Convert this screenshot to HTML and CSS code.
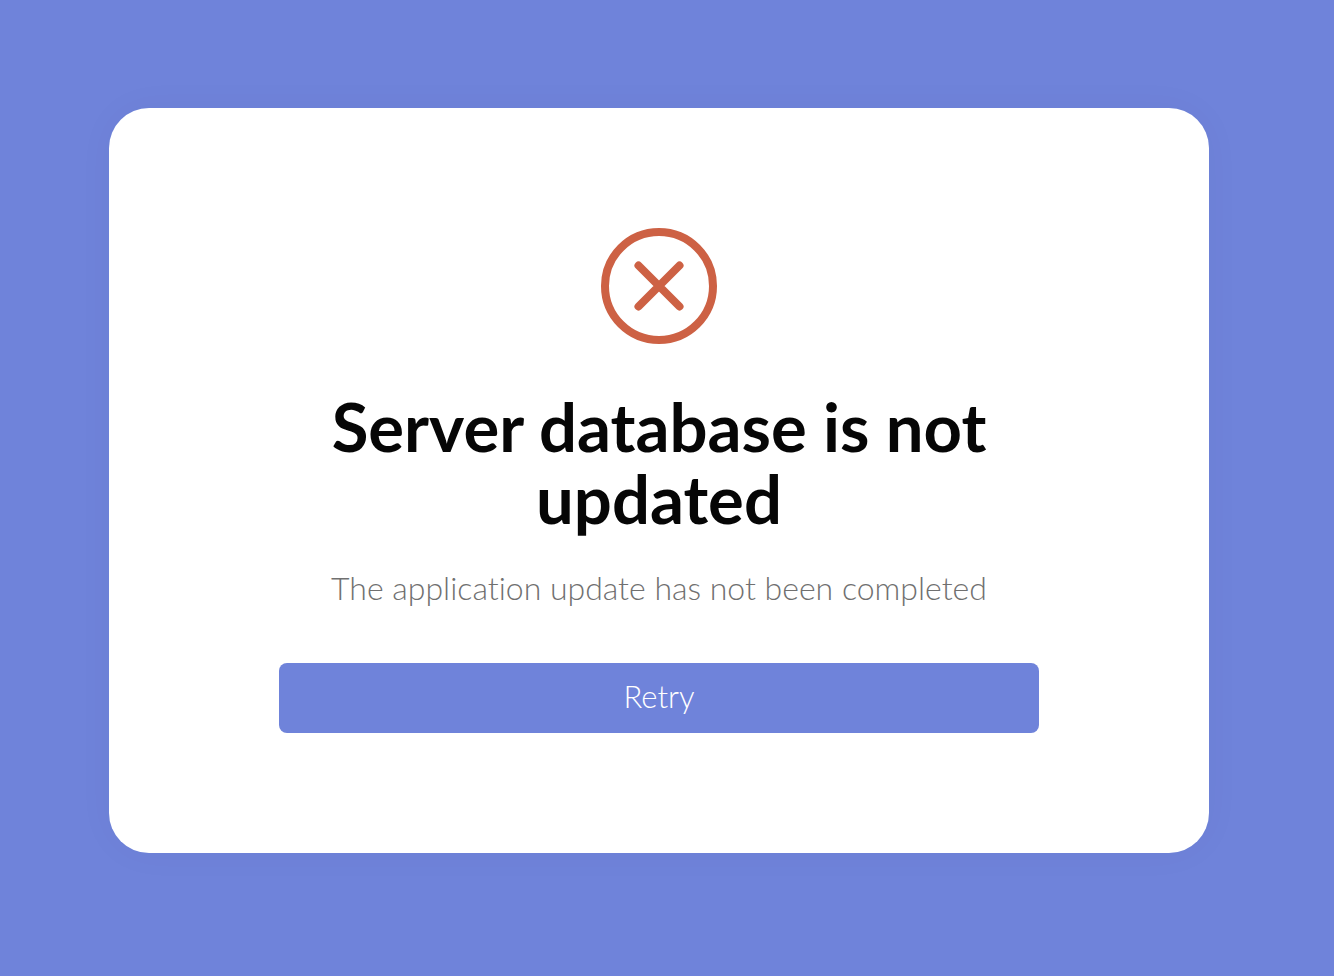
FILE: index.html
```html
<!DOCTYPE html>
<html lang="en">
  <head>
    <meta charset="UTF-8">
    <meta name="viewport" content="width=device-width, initial-scale=1.0">
    <title>Server database is not updated</title>
    <link rel="stylesheet" href="styles.css">
  </head>
  <body>
    <main class="card">
      <div class="content">
        <svg class="error-icon" viewBox="0 0 116 116" fill="none" aria-hidden="true">
          <circle cx="58" cy="58" r="54" />
          <path d="M37.5 37.5l41 41M78.5 37.5l-41 41" />
        </svg>
        <h1>Server database is not updated</h1>
        <p class="subtitle">The application update has not been completed</p>
        <button type="button" class="retry-btn">Retry</button>
      </div>
    </main>
  </body>
</html>
```
FILE: styles.css
```css
:root {
  --primary-color: #6f83da;
  --danger-color: #cd6144;
  --title-color: #060606;
  --secondary-text: #707070;
  --card-bg: #ffffff;
}

* {
  margin: 0;
  padding: 0;
  box-sizing: border-box;
}

body {
  display: flex;
  align-items: center;
  justify-content: center;
  min-height: 100vh;
  padding: 0 16px 15px 0;
  font-family: 'Lato', sans-serif;
  font-variant-ligatures: none;
  background-color: var(--primary-color);
}

.card {
  width: 100%;
  max-width: 1100px;
  padding: 120px 32px;
  background-color: var(--card-bg);
  border-radius: 40px;
  box-shadow: 0 0 40px rgba(0, 0, 0, 0.03);
}

.content {
  display: flex;
  flex-direction: column;
  align-items: center;
  max-width: 760px;
  margin: 0 auto;
  text-align: center;
}

.error-icon {
  width: 116px;
  height: 116px;
  margin-bottom: 46px;
  stroke: var(--danger-color);
  stroke-width: 8;
  stroke-linecap: round;
}

h1 {
  margin-bottom: 34px;
  color: var(--title-color);
  font-size: 67px;
  font-weight: 700;
  line-height: 72px;
}

.subtitle {
  margin-bottom: 55px;
  color: var(--secondary-text);
  font-size: 32px;
  font-weight: 300;
  line-height: 40px;
}

.retry-btn {
  width: 100%;
  height: 70px;
  padding-bottom: 4px;
  color: var(--card-bg);
  background-color: var(--primary-color);
  border: none;
  border-radius: 8px;
  font-family: inherit;
  font-size: 31px;
  font-weight: 300;
  cursor: pointer;
}
```
